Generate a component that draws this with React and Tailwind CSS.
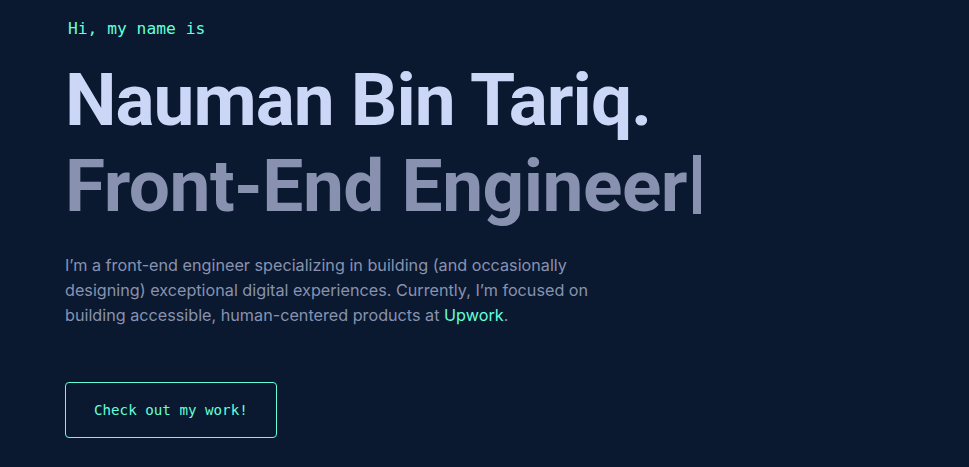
export default function App() {
  return (
    <div className="min-h-[467px] w-full bg-[#0a192f] overflow-hidden">
      <section className="flex flex-col items-start pl-[65px] pt-[18px]">
        <p className="ml-[3px] text-[16.3px] leading-[22px] text-[#64ffda] [font-family:'DejaVu_Sans_Mono',monospace]">
          Hi, my name is
        </p>
        <h1 className="mt-[19px] text-[73px] leading-[82px] font-bold tracking-[-1px] text-[#ccd6f6] [font-family:Roboto,sans-serif]">
          Nauman Bin Tariq.
        </h1>
        <h2 className="mt-[4px] flex items-center text-[73px] leading-[82px] font-bold tracking-[-0.5px] text-[#8892b0] [font-family:Roboto,sans-serif]">
          Front-End Engineer
          <span className="ml-[6px] mt-[-3px] inline-block h-[59px] w-[8px] bg-[#8892b0]" />
        </h2>
        <p className="mt-[26px] max-w-[540px] text-[16.2px] leading-[25px] text-[#8892b0] [font-family:Inter,sans-serif]">
          I’m a front-end engineer specializing in building (and occasionally designing) exceptional digital experiences. Currently, I’m focused on building accessible, human-centered products at{' '}
          <a href="#" className="text-[#64ffda]">Upwork</a>.
        </p>
        <button className="mt-[54px] rounded-[4px] border border-[#64ffda] px-[28px] py-[18px] text-[14.2px] leading-[18px] text-[#64ffda] [font-family:'DejaVu_Sans_Mono',monospace]">
          Check out my work!
        </button>
      </section>
    </div>
  );
}
